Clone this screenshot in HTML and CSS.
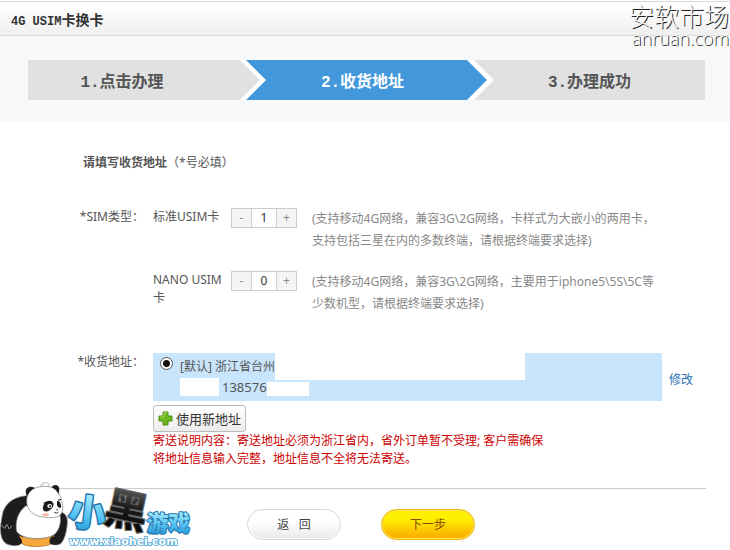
FILE: index.html
```html
<!DOCTYPE html>
<html lang="zh-CN">
<head>
    <meta charset="UTF-8">
    <meta name="viewport" content="width=device-width, initial-scale=1.0">
    <title>4G USIM卡换卡</title>
    <link rel="stylesheet" href="styles.css">
</head>
<body>
    <header class="header">
        <h1><span class="latin">4G USIM</span>卡换卡</h1>
    </header>

    <div class="market">
        <div class="market-name">安软市场</div>
        <div class="market-url">anruan.com</div>
    </div>

    <nav class="steps-wrap">
        <ol class="steps">
            <li class="step first"><span class="latin">1.</span>点击办理</li>
            <li class="step current"><span class="step-inner"><span class="latin">2.</span>收货地址</span></li>
            <li class="step last"><span class="latin">3.</span>办理成功</li>
        </ol>
    </nav>

    <form class="form">
        <h2 class="form-title">请填写收货地址<span>（*号必填）</span></h2>

        <div class="row">
            <div class="row-label">*SIM类型：</div>
            <div class="sim-list">
                <div class="sim">
                    <label class="sim-name" for="usim">标准USIM卡</label>
                    <div class="counter">
                        <button type="button" data-step="-1" aria-label="减少">-</button>
                        <input type="text" id="usim" value="1">
                        <button type="button" data-step="1" aria-label="增加">+</button>
                    </div>
                    <p class="sim-desc">(支持移动4G网络，兼容3G\2G网络，卡样式为大嵌小的两用卡，支持包括三星在内的多数终端，请根据终端要求选择)</p>
                </div>
                <div class="sim">
                    <label class="sim-name" for="nano">NANO USIM卡</label>
                    <div class="counter">
                        <button type="button" data-step="-1" aria-label="减少">-</button>
                        <input type="text" id="nano" value="0">
                        <button type="button" data-step="1" aria-label="增加">+</button>
                    </div>
                    <p class="sim-desc">(支持移动4G网络，兼容3G\2G网络，主要用于iphone5\5S\5C等少数机型，请根据终端要求选择)</p>
                </div>
            </div>
        </div>

        <div class="row">
            <div class="row-label">*收货地址：</div>
            <div class="address-area">
                <div class="address-line">
                    <div class="address">
                        <input type="radio" name="address" id="addr1" checked>
                        <label for="addr1">
                            <span class="addr-top">[默认] 浙江省台州<i class="mask mask-street"></i></span>
                            <span class="addr-bottom"><i class="mask mask-name"></i>138576<i class="mask mask-phone"></i></span>
                        </label>
                    </div>
                    <a class="edit" href="#">修改</a>
                </div>
                <button type="button" class="new-address">
                    <svg width="15" height="15" viewBox="0 0 15 15">
                        <path d="M5 1h5v4h4v5h-4v4h-5v-4h-4v-5h4z" fill="#6cb51f" stroke="#4a9015" stroke-linejoin="round"/>
                        <path d="M6 6V2h3M2 6h4" fill="none" stroke="#a5dc5a"/>
                    </svg>
                    使用新地址
                </button>
                <p class="notice">寄送说明内容：寄送地址必须为浙江省内，省外订单暂不受理; 客户需确保将地址信息输入完整，地址信息不全将无法寄送。</p>
            </div>
        </div>

        <div class="actions">
            <button type="button" class="btn btn-back">返&nbsp;&nbsp;&nbsp;回</button>
            <button type="submit" class="btn btn-next">下一步</button>
        </div>
    </form>

    <svg class="logo" width="200" height="75" viewBox="0 0 600 225">
        <defs>
            <linearGradient id="blue" x1="0" y1="0" x2="0" y2="1">
                <stop offset="0.2" stop-color="#a8ebfd"/>
                <stop offset="0.6" stop-color="#56c4f2"/>
                <stop offset="1" stop-color="#1c8fd2"/>
            </linearGradient>
            <linearGradient id="black" x1="0" y1="0" x2="0" y2="1">
                <stop offset="0.2" stop-color="#555"/>
                <stop offset="0.5" stop-color="#1c1c1c"/>
                <stop offset="1" stop-color="#000"/>
            </linearGradient>
        </defs>
        <!-- 熊猫 -->
        <path d="M86 62C46 62 12 84 7 120c-4 24-7 38-5 52 2 22 12 36 28 38 14 4 30 2 34-6l20-60z" fill="#1d1d1d" stroke="#888" stroke-width="2"/>
        <path d="M178 110c16 2 26 14 24 34-2 26-8 50-20 62-12 6-28 4-34-4z" fill="#1d1d1d" stroke="#888" stroke-width="2"/>
        <path d="M58 182c20 12 82 14 104-2l-4 24c-18 14-74 14-92 2z" fill="#f6a83c" stroke="#a66a20" stroke-width="2"/>
        <path d="M78 92c-24 18-34 48-28 78 18 24 84 28 114 8 16-16 22-40 14-66z" fill="#fff" stroke="#777" stroke-width="2"/>
        <path d="M4 150l10 10 6-12 8 14 8-10" fill="none" stroke="#999" stroke-width="3"/>
        <circle cx="92" cy="50" r="15" fill="#1d1d1d"/>
        <ellipse cx="166" cy="44" rx="12" ry="14" fill="#1d1d1d"/>
        <path d="M124 36c-4-8 0-10 6-8-2-6 4-10 8-3 6-3 10 1 8 9" fill="#fff" stroke="#999" stroke-width="2"/>
        <path d="M80 78c0-28 20-44 56-44 26 0 44 16 48 42 8 22 6 44-14 50-32 6-90 0-90-48z" fill="#fff" stroke="#777" stroke-width="2"/>
        <path d="M80 66c-4-20 8-32 24-28-12 6-20 16-24 28zM156 35c14-6 22 8 20 24-4-10-10-18-20-24z" fill="#1d1d1d"/>
        <path d="M130 92c4-16 24-20 30-7 4 13-14 26-25 24-6-2-8-8-5-17z" fill="#1d1d1d"/>
        <path d="M171 78c8-2 14 10 12 20-6 2-10-2-12-8z" fill="#1d1d1d"/>
        <ellipse cx="149" cy="93" rx="7" ry="6" fill="#fff"/>
        <circle cx="150" cy="94" r="3" fill="#111"/>
        <path d="M131 84l24-4M174 76l9-3" stroke="#111" stroke-width="3"/>
        <ellipse cx="137" cy="119" rx="10" ry="5" fill="#f9b9ad"/>
        <path d="M163 112q6 6 12-1M169 104l5 1" fill="none" stroke="#333" stroke-width="3"/>
        <path d="M44 186c10-6 24 4 22 18-10 8-24 8-32 2zM160 184c-10 2-14 12-10 22 10 4 20 4 28 0z" fill="#1d1d1d"/>
        <!-- 站名 -->
        <g class="logo-text">
            <text x="207" y="154" font-size="112" fill="url(#blue)" stroke="#2474ab" stroke-width="9" transform="rotate(7 260 110)">小</text>
            <text class="logo-black" x="316" y="153" font-size="128" fill="url(#black)" stroke="#666" stroke-width="7" transform="rotate(12 380 105)">黑</text>
            <text x="440" y="167" font-size="65" fill="url(#blue)" stroke="#2474ab" stroke-width="6">游戏</text>
        </g>
        <text class="logo-url" x="207" y="209" font-size="33">www.xiaohei.com</text>
    </svg>

    <script>
        document.querySelectorAll('.counter button').forEach(function (btn) {
            btn.addEventListener('click', function () {
                var input = btn.parentNode.querySelector('input');
                var value = (parseInt(input.value, 10) || 0) + Number(btn.dataset.step);
                input.value = Math.max(0, value);
            });
        });
    </script>
</body>
</html>
```
FILE: styles.css
```css
* {
    margin: 0;
    padding: 0;
    box-sizing: border-box;
}

body {
    position: relative;
    min-height: 100vh;
    background: #fff;
    color: #555;
    font-family: "Noto Sans", "Noto Sans CJK SC", sans-serif;
    font-size: 12px;
    line-height: 18px;
}

button,
input {
    font: inherit;
    color: inherit;
}

button {
    cursor: pointer;
}

/* 顶部 */
.header {
    margin-top: 1px;
    height: 35px;
    padding: 0 11px;
    border-top: 1px solid #d8d8d8;
    border-bottom: 1px solid #d9d9d9;
    background: linear-gradient(#fff 15%, #efefef);
}

.header h1 {
    color: #333;
    font-family: "Noto Sans CJK SC", sans-serif;
    font-size: 14px;
    line-height: 34px;
}

.header .latin {
    font-family: "Liberation Mono", monospace;
    font-size: 12px;
}

.market {
    position: absolute;
    top: 0;
    right: 1px;
    color: #f4f4f4;
    font-weight: 300;
    text-align: right;
    text-shadow: 1px 1px 0 #222;
    white-space: nowrap;
}

.market-name {
    font-family: "Noto Sans CJK SC", sans-serif;
    font-size: 25px;
    line-height: 30px;
}

.market-url {
    font-family: "Open Sans", sans-serif;
    font-size: 18px;
    line-height: 16px;
}

/* 步骤条 */
.steps-wrap {
    padding: 24px 25px 22px 28px;
    background: #f8f8f8;
}

.steps {
    display: grid;
    grid-template-columns: 212fr 254fr 211fr;
    grid-template-rows: 40px;
    background: #e1e1e1;
    list-style: none;
}

.step {
    color: #555;
    font-family: "Noto Sans CJK SC", sans-serif;
    font-size: 16px;
    font-weight: bold;
    line-height: 40px;
    text-align: center;
}

.step .latin {
    font-family: "Liberation Mono", monospace;
}

.step.first {
    padding-right: 24px;
}

.step.last {
    padding-right: 20px;
}

.step.current {
    padding: 0 7px 0 6px;
    background: #fff;
    clip-path: polygon(0 0, calc(100% - 20px) 0, 100% 50%, calc(100% - 20px) 100%, 0 100%, 20px 50%);
}

.step-inner {
    display: block;
    height: 40px;
    padding-right: 8px;
    background: #4398dc;
    color: #fff;
    clip-path: polygon(0 0, calc(100% - 20px) 0, 100% 50%, calc(100% - 20px) 100%, 0 100%, 20px 50%);
}

/* 表单 */
.form {
    padding: 32px 24px 10px 28px;
}

.form-title {
    margin: 0 0 36px 55px;
    font-size: 12px;
    line-height: 18px;
}

.form-title span {
    font-weight: normal;
}

.row {
    display: flex;
    padding-right: 13px;
}

.row-label {
    flex: none;
    width: 125px;
    padding-right: 9px;
    text-align: right;
}

.sim-list {
    flex: 1;
    padding-right: 31px;
}

.sim {
    display: grid;
    grid-template-columns: 72px 66px 1fr;
    height: 63px;
}

.sim + .sim {
    height: 82px;
}

.sim-name {
    margin-right: -2px;
}

.counter {
    display: flex;
    height: 20px;
    margin-left: 6px;
    width: 66px;
    border: 1px solid #ccc;
}

.counter button {
    width: 19px;
    border: 0;
    background: #f5f5f5;
    color: #888;
    line-height: 18px;
}

.counter input {
    flex: 1;
    min-width: 0;
    border: 0;
    border-left: 1px solid #ccc;
    border-right: 1px solid #ccc;
    color: #333;
    text-align: center;
}

.sim-desc {
    margin-left: 21px;
    color: #888;
    line-height: 22px;
}

.address-area {
    flex: 1;
}

.address-line {
    display: flex;
    align-items: center;
    gap: 7px;
}

.address {
    flex: 1;
    display: flex;
    height: 48px;
    background: #c9e5fc;
}

.address input {
    appearance: none;
    flex: none;
    width: 13px;
    height: 13px;
    margin: 4px 7px 0;
    border: 1px solid #555;
    border-radius: 50%;
    background: radial-gradient(circle, #111 3px, #fff 4px);
}

.address label {
    flex: 1;
}

.addr-top,
.addr-bottom {
    display: flex;
}

.addr-top {
    height: 25px;
    line-height: 27px;
}

.addr-bottom {
    align-items: center;
    height: 18px;
    font-size: 13px;
}

.mask {
    background: #fff;
}

.mask-street {
    width: 250px;
    height: 27px;
}

.mask-name {
    width: 39px;
    height: 18px;
    margin-right: 3px;
}

.mask-phone {
    width: 42px;
    height: 14px;
    align-self: flex-end;
}

.edit {
    padding-top: 6px;
    color: #2a6fb5;
    text-decoration: none;
}

.new-address {
    display: flex;
    align-items: center;
    gap: 3px;
    height: 27px;
    margin-top: 4px;
    padding: 0 4px;
    border: 1px solid #bbb;
    border-radius: 3px;
    background: linear-gradient(#fff, #ececec);
    color: #333;
    font-size: 13px;
}

.notice {
    max-width: 396px;
    color: #c00;
}

.actions {
    display: flex;
    justify-content: center;
    gap: 40px;
    margin-top: 20px;
    padding: 20px 12px 0 0;
    border-top: 1px solid #ccc;
}

.btn {
    width: 94px;
    height: 31px;
    border: 1px solid #d8d8d8;
    border-radius: 16px;
    background: linear-gradient(#fff 40%, #e8e8e8);
    box-shadow: inset 0 0 0 1px #fff;
    color: #444;
}

.btn-next {
    border-color: #f0b400;
    background: linear-gradient(#ffef00 30%, #fba800);
    box-shadow: inset 0 0 0 1px #ffe45c;
    color: #8a4b00;
}

/* 左下角标志 */
.logo {
    position: absolute;
    left: 0;
    bottom: 0;
    overflow: visible;
}

.logo-text {
    font-family: "Noto Sans CJK SC", sans-serif;
    font-weight: 900;
    paint-order: stroke;
    stroke-linejoin: round;
}

.logo-black {
    font-weight: 700;
}

.logo-url {
    fill: #fff;
    stroke: #4aa3d4;
    stroke-width: 5px;
    paint-order: stroke;
    font-family: "DejaVu Sans", sans-serif;
    font-weight: bold;
}
```
